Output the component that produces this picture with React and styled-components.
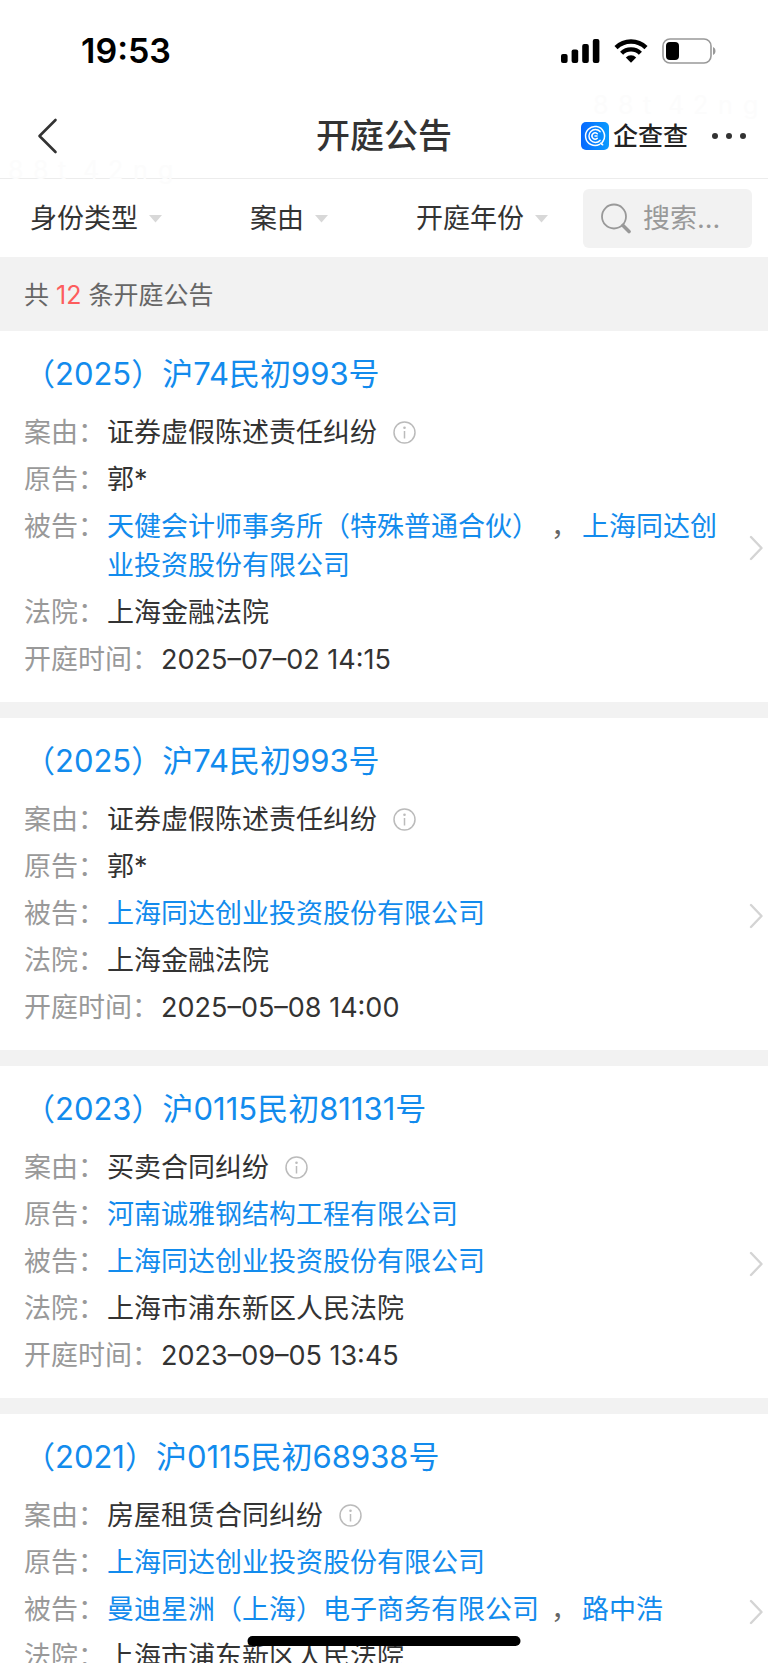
import React from "react";
import styled, { createGlobalStyle } from "styled-components";

const GlobalStyle = createGlobalStyle`
  *, *::before, *::after { box-sizing: border-box; }
  body {
    margin: 0;
    background: #fff;
    color: #333;
    font-family: Inter, "Noto Sans CJK SC", sans-serif;
    font-size: 27px;
    font-weight: 400;
    text-spacing-trim: space-all;
  }
  button, input { font: inherit; color: inherit; }
  button { padding: 0; border: 0; background: none; cursor: pointer; }
  svg { display: block; flex: none; }
`;

const Screen = styled.div`
  position: relative;
  display: flex;
  flex-direction: column;
  height: 100vh;
  overflow: hidden;
`;

const StatusBar = styled.div`
  display: flex;
  align-items: center;
  justify-content: space-between;
  height: 102px;
  padding: 0 51px 0 81px;
  color: #000;
`;

const Clock = styled.time`
  font-size: 34px;
  line-height: 40px;
  font-weight: 600;
`;

const StatusIcons = styled.div`
  display: flex;
  align-items: center;
  gap: 14px;
`;

const NavBar = styled.header`
  display: grid;
  grid-template-columns: 1fr auto 1fr;
  align-items: center;
  height: 77px;
  padding: 0 20px 8px;
  border-bottom: 1px solid #ececec;
`;

const BackButton = styled.button`
  justify-self: start;
  padding: 0 16px;
`;

const PageTitle = styled.h1`
  margin: 0;
  font-size: 34px;
  line-height: 44px;
  font-weight: 500;
`;

const NavActions = styled.div`
  display: flex;
  align-items: center;
  justify-self: end;
  gap: 22px;
`;

const Brand = styled.a`
  display: flex;
  align-items: center;
  gap: 4px;
  color: #222;
  font-size: 25px;
  line-height: 36px;
  font-weight: 500;
  text-decoration: none;
`;

const FilterBar = styled.div`
  display: flex;
  align-items: center;
  height: 78px;
  padding: 1px 16px 0 0;
`;

const Filters = styled.div`
  display: flex;
  flex: 1;
  justify-content: space-between;
  padding: 0 35px 0 30px;
`;

const FilterButton = styled.button`
  display: flex;
  align-items: center;
  gap: 11px;
  line-height: 39px;
`;

const SearchBox = styled.label`
  display: flex;
  align-items: center;
  gap: 12px;
  width: 169px;
  height: 59px;
  padding-left: 18px;
  border-radius: 6px;
  background: #f2f2f2;
`;

const SearchInput = styled.input`
  flex: 1;
  min-width: 0;
  padding: 0;
  border: 0;
  outline: 0;
  background: none;
  line-height: 39px;
  &::placeholder { color: #999; opacity: 1; }
`;

const Summary = styled.p`
  margin: 0;
  padding: 19px 24px 17px;
  background: #f2f2f2;
  color: #666;
  font-size: 25px;
  line-height: 38px;
`;

const Total = styled.span`
  color: #fd5d5d;
`;

const List = styled.main`
  display: flex;
  flex: 1;
  flex-direction: column;
  gap: 16px;
  min-height: 0;
  overflow: auto;
  scrollbar-width: none;
  background: #f2f2f2;
`;

const Card = styled.article`
  flex: none;
  padding: 21px 5px 23px 24px;
  background: #fff;
`;

const CaseNumber = styled.h2`
  margin: 0 0 17px;
  color: #128bed;
  font-size: 31px;
  line-height: 44px;
  font-weight: 400;
`;

const CardBody = styled.div`
  display: flex;
  align-items: center;
  gap: 14px;
`;

const Fields = styled.dl`
  display: flex;
  flex: 1;
  flex-direction: column;
  gap: 8px;
  margin: 0;
`;

const Field = styled.div`
  display: flex;
  gap: 2px;
  line-height: 39px;
`;

const Label = styled.dt`
  flex: none;
  color: #999;
`;

const Value = styled.dd`
  display: flex;
  align-items: center;
  gap: 16px;
  margin: 0;
`;

const PartyList = styled.dd`
  margin: 0;
`;

const PartyLink = styled.a`
  color: #128bed;
  text-decoration: none;
`;

const Comma = styled.span`
  margin: 0 4px 0 12px;
  color: #666;
`;

const Watermark = styled.div`
  position: absolute;
  top: ${(p) => p.$top}px;
  ${(p) => p.$side}: ${(p) => p.$inset}px;
  display: grid;
  grid-template-columns: repeat(7, 25px);
  color: #fcfcfc;
  font-size: 25px;
  line-height: 30px;
  pointer-events: none;
`;

const HomeIndicator = styled.div`
  position: absolute;
  bottom: 17px;
  left: 50%;
  width: 273px;
  height: 10px;
  border-radius: 5px;
  background: #000;
  transform: translateX(-50%);
`;

const SignalIcon = () => (
  <svg width="39" height="24" viewBox="0 0 39 24" aria-hidden="true">
    <rect x="0" y="15" width="6.6" height="9" rx="2" />
    <rect x="10.6" y="10.5" width="6.6" height="13.5" rx="2" />
    <rect x="21.2" y="5" width="6.6" height="19" rx="2" />
    <rect x="31.8" y="0" width="6.6" height="24" rx="2" />
  </svg>
);

const WifiIcon = () => (
  <svg width="34" height="24" viewBox="0 0 34 24" aria-hidden="true">
    <g fill="none" stroke="#000" strokeWidth="4.4">
      <path d="M2 8.6a21.4 21.4 0 0 1 30 0" />
      <path d="M7.6 14.2a13.4 13.4 0 0 1 18.8 0" />
    </g>
    <path d="M11.8 18.4a7.6 7.6 0 0 1 10.4 0L17 23.8z" />
  </svg>
);

const BatteryIcon = () => (
  <svg width="55" height="26" viewBox="0 0 55 26" aria-hidden="true">
    <rect x="1" y="1" width="48" height="24" rx="7" fill="none" stroke="#999" strokeWidth="1.6" />
    <rect x="4" y="4" width="13" height="18" rx="4" />
    <path d="M51 9c3.3 1.2 3.3 6.8 0 8z" fill="#999" />
  </svg>
);

const BackIcon = () => (
  <svg width="24" height="36" viewBox="0 0 24 36" fill="none" stroke="#333" strokeWidth="2.6" strokeLinecap="round" strokeLinejoin="round" aria-hidden="true">
    <path d="M19.5 2 3.5 18l16 16" />
  </svg>
);

const BrandIcon = () => (
  <svg width="28" height="28" viewBox="0 0 28 28" fill="none" aria-hidden="true">
    <defs>
      <linearGradient id="brandBlue" x1="0" y1="0" x2="1" y2="0">
        <stop offset="0" stopColor="#0668ff" />
        <stop offset="1" stopColor="#0a9bff" />
      </linearGradient>
    </defs>
    <rect width="28" height="28" rx="5" fill="url(#brandBlue)" />
    <g stroke="#fff" strokeWidth="1.5" strokeLinecap="round">
      <path d="M18.6 22.3A9.5 9.5 0 1 1 22.4 18.5L20.5 21.5" />
      <path d="M19 9.6A6.4 6.4 0 1 0 19 18.4" />
      <path d="M16.3 11.8A3.1 3.1 0 1 0 16.3 16.2" />
      <path d="M14 14h2M19.5 21.2l2.2 1.6" />
    </g>
  </svg>
);

const MoreIcon = () => (
  <svg width="38" height="8" viewBox="0 0 38 8" fill="#333" aria-hidden="true">
    <circle cx="5" cy="4" r="3" />
    <circle cx="19" cy="4" r="3" />
    <circle cx="33" cy="4" r="3" />
  </svg>
);

const CaretIcon = () => (
  <svg width="13" height="8" viewBox="0 0 13 8" aria-hidden="true">
    <path d="M0 0h13L6.5 7.5z" fill="#d8d8d8" />
  </svg>
);

const SearchIcon = () => (
  <svg width="30" height="31" viewBox="0 0 30 31" fill="none" stroke="#999" strokeLinecap="round" aria-hidden="true">
    <circle cx="13" cy="13.5" r="12" strokeWidth="1.8" />
    <path d="m22 22.5 6 6" strokeWidth="3.6" />
  </svg>
);

const InfoIcon = () => (
  <svg width="23" height="23" viewBox="0 0 23 23" aria-hidden="true">
    <circle cx="11.5" cy="11.5" r="10.5" fill="none" stroke="#bbb" strokeWidth="1.5" />
    <circle cx="11.5" cy="6.7" r="1.3" fill="#bbb" />
    <path d="M11.5 10v7.5" stroke="#bbb" strokeWidth="1.5" />
  </svg>
);

const Arrow = styled.svg`
  margin-top: 4px;
`;

const ArrowIcon = () => (
  <Arrow width="14" height="26" viewBox="0 0 14 26" fill="none" stroke="#d4d4d4" strokeWidth="2.4" strokeLinecap="round" strokeLinejoin="round" aria-hidden="true">
    <path d="m2 2 10.5 11L2 24" />
  </Arrow>
);

const TONGDA = "上海同达创业投资股份有限公司";

const hearings = [
  {
    number: "（2025）沪74民初993号",
    cause: "证券虚假陈述责任纠纷",
    plaintiff: "郭*",
    defendants: ["天健会计师事务所（特殊普通合伙）", TONGDA],
    court: "上海金融法院",
    time: "2025–07–02 14:15",
  },
  {
    number: "（2025）沪74民初993号",
    cause: "证券虚假陈述责任纠纷",
    plaintiff: "郭*",
    defendants: [TONGDA],
    court: "上海金融法院",
    time: "2025–05–08 14:00",
  },
  {
    number: "（2023）沪0115民初81131号",
    cause: "买卖合同纠纷",
    plaintiff: "河南诚雅钢结构工程有限公司",
    plaintiffLinked: true,
    defendants: [TONGDA],
    court: "上海市浦东新区人民法院",
    time: "2023–09–05 13:45",
  },
  {
    number: "（2021）沪0115民初68938号",
    cause: "房屋租赁合同纠纷",
    plaintiff: TONGDA,
    plaintiffLinked: true,
    defendants: ["曼迪星洲（上海）电子商务有限公司", "路中浩"],
    court: "上海市浦东新区人民法院",
    time: "",
  },
];

function Parties({ names }) {
  return (
    <PartyList>
      {names.map((name, i) => (
        <React.Fragment key={name}>
          {i > 0 && <Comma>，</Comma>}
          <PartyLink href="#company">{name}</PartyLink>
        </React.Fragment>
      ))}
    </PartyList>
  );
}

function HearingCard({ item }) {
  return (
    <Card>
      <CaseNumber>{item.number}</CaseNumber>
      <CardBody>
        <Fields>
          <Field>
            <Label>案由：</Label>
            <Value>
              {item.cause}
              <button type="button" aria-label="案由说明"><InfoIcon /></button>
            </Value>
          </Field>
          <Field>
            <Label>原告：</Label>
            {item.plaintiffLinked ? <Parties names={[item.plaintiff]} /> : <Value>{item.plaintiff}</Value>}
          </Field>
          <Field>
            <Label>被告：</Label>
            <Parties names={item.defendants} />
          </Field>
          <Field>
            <Label>法院：</Label>
            <Value>{item.court}</Value>
          </Field>
          <Field>
            <Label>开庭时间：</Label>
            <Value>{item.time}</Value>
          </Field>
        </Fields>
        <ArrowIcon />
      </CardBody>
    </Card>
  );
}

function Mark({ top, side, inset }) {
  return (
    <Watermark $top={top} $side={side} $inset={inset} aria-hidden="true">
      {[..."88t42ng"].map((c, i) => <span key={i}>{c}</span>)}
    </Watermark>
  );
}

export default function App() {
  return (
    <Screen>
      <GlobalStyle />
      <StatusBar>
        <Clock>19:53</Clock>
        <StatusIcons>
          <SignalIcon />
          <WifiIcon />
          <BatteryIcon />
        </StatusIcons>
      </StatusBar>
      <NavBar>
        <BackButton type="button" aria-label="返回"><BackIcon /></BackButton>
        <PageTitle>开庭公告</PageTitle>
        <NavActions>
          <Brand href="#home"><BrandIcon />企查查</Brand>
          <button type="button" aria-label="更多"><MoreIcon /></button>
        </NavActions>
      </NavBar>
      <FilterBar>
        <Filters>
          {["身份类型", "案由", "开庭年份"].map((name) => (
            <FilterButton key={name} type="button" aria-haspopup="listbox">
              {name}
              <CaretIcon />
            </FilterButton>
          ))}
        </Filters>
        <SearchBox>
          <SearchIcon />
          <SearchInput type="search" aria-label="搜索" placeholder="搜索..." />
        </SearchBox>
      </FilterBar>
      <Summary>共 <Total>12</Total> 条开庭公告</Summary>
      <List>
        {hearings.map((item, i) => <HearingCard key={i} item={item} />)}
      </List>
      <Mark top={90} side="right" inset={0} />
      <Mark top={155} side="left" inset={8} />
      <HomeIndicator />
    </Screen>
  );
}
